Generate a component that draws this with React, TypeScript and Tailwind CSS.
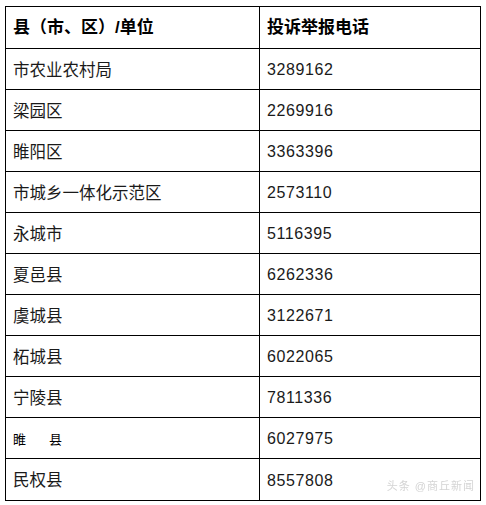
const rows: [string, string][] = [
  ["市农业农村局", "3289162"],
  ["梁园区", "2269916"],
  ["睢阳区", "3363396"],
  ["市城乡一体化示范区", "2573110"],
  ["永城市", "5116395"],
  ["夏邑县", "6262336"],
  ["虞城县", "3122671"],
  ["柘城县", "6022065"],
  ["宁陵县", "7811336"],
  ["睢县", "6027975"],
  ["民权县", "8557808"],
];

export default function App() {
  return (
    <main className="w-[486px] h-[505px] bg-white pt-[6px] pl-[5px] font-['Liberation_Sans','Noto_Sans_CJK_SC',sans-serif] text-[#1a1a1a]">
      <div className="relative w-[476px] border border-black">
        {/* 表头 */}
        <div className="grid grid-cols-[254px_1fr] h-[42px] border-b border-black font-bold text-[17px] text-black">
          <div className="flex items-center pl-[7px] border-r border-black">县（市、区）/单位</div>
          <div className="flex items-center pl-[7px]">投诉举报电话</div>
        </div>
        {rows.map(([name, phone], i) => (
          <div
            key={name}
            className={
              "grid grid-cols-[254px_1fr] h-[41px] " +
              (i < rows.length - 1 ? "border-b border-black" : "")
            }
          >
            <div className="flex items-center pt-[2px] pl-[7px] border-r border-black text-[16.5px]">
              {name === "睢县" ? (
                <span className="text-[13px] text-black font-['Noto_Sans_CJK_SC',serif]">
                  睢<span className="inline-block w-[23px]" />县
                </span>
              ) : (
                name
              )}
            </div>
            <div className="flex items-center pt-[2px] pl-[7px] text-[16px] tracking-[0.6px]">{phone}</div>
          </div>
        ))}
        {/* 水印 */}
        <div className="absolute right-[5px] bottom-[6px] text-[11px] text-[#d4d4d4] tracking-[1px] blur-[0.6px]">
          头条 @商丘新闻
        </div>
      </div>
    </main>
  );
}
